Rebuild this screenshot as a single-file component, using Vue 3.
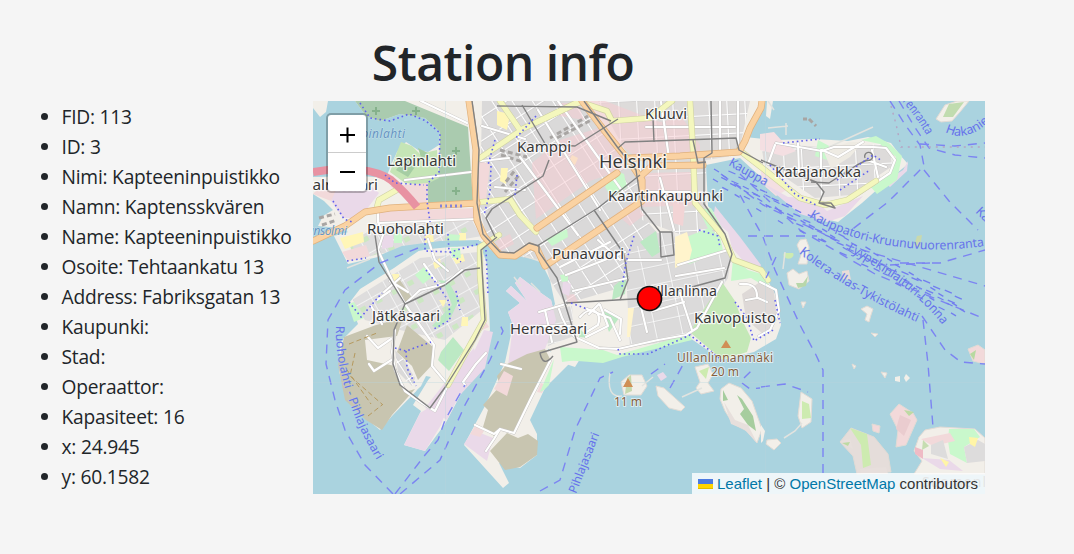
<script setup>
const info = [
  'FID: 113', 'ID: 3', 'Nimi: Kapteeninpuistikko', 'Namn: Kaptensskvären', 'Name: Kapteeninpuistikko',
  'Osoite: Tehtaankatu 13', 'Address: Fabriksgatan 13', 'Kaupunki:', 'Stad:', 'Operaattor:',
  'Kapasiteet: 16', 'x: 24.945', 'y: 60.1582'
]

const land = [
  'M355 101L366 116 380 121 400 114 425 118 440 132 439 145 428 152 418 150 406 142 397 152 391 165 386 178 362 176 313 177 313 194 324 201 333 210 323 216 318 226 340 228 348 232 334 236 348 264 378 257 402 247 440 241 480 241 505 256 528 254 540 260 550 280 555 304 549 315 545 345 560 362 575 367 580 359 618 357 690 338 722 360 754 352 776 339 781 325 778 300 765 275 738 248 728 227 708 206 706 165 740 158 800 213 838 222 862 203 880 187 908 164 900 155 891 143 868 137 848 141 815 139 775 140 745 137 754 119 764 101Z',
  'M350 302L360 289 394 268 420 250 480 244 487 264 490 330 475 372 461 394 445 424 425 451 404 445 421 411 413 405 430 377 392 416 380 430 352 407 339 372 340 342 358 324Z',
  'M506 291L511 286 527 301 515 283 520 277 541 293 551 300 556 320 548 350 570 363 545 388 530 420 537 434 537 455 520 468 499 463 509 483 503 488 464 445 486 404 505 362 513 325 508 312 520 303Z',
  'M313 101H328L326 112 320 117 313 108Z',
  'M767 101L773 101 770 119 766 116Z'
]

const cityBlocks = [
  ['grid-a', 'M482 101H585L645 185 640 213 672 250 630 285 565 304 550 280 545 262 490 250 480 210Z'],
  ['grid-b', 'M598 101H750L738 155 706 160 706 213 722 237 690 238 642 220 636 170Z'],
  ['grid-c', 'M625 254L660 232 674 232 680 266 732 250 728 278 690 338 630 347Z'],
  ['grid-d', 'M352 300L420 258 478 252 482 310 445 340 400 330 365 320Z'],
  ['grid-d', 'M348 240L380 226 478 220 482 236 378 254 355 261Z'],
  ['grid-b', 'M761 143L820 147 886 144 894 165 850 195 815 198 764 163Z'],
  ['grid-a', 'M395 350L404 360 415 378 412 386 398 372Z'],
  ['grid-c', 'M541 311L572 306 574 336 548 346Z']
]

const areas = [
  ['#aacbaf', 'M355 101H405L468 127 473 203 428 203 427 182 439 170 440 132 425 118 400 114 380 121 366 116Z'],
  ['#c5e5b6', 'M397 152L401 142 412 146 420 154 437 150 439 178 425 185 405 183 390 172Z'],
  ['#a5cda3', 'M405 158L417 164 408 177 396 170ZM418 148L428 153 422 160Z'],
  ['#f2d9da', 'M390 186L428 183 427 203 417 203ZM378 211L477 208 474 221 380 222Z'],
  ['#ead9e9', 'M333 192L365 181 379 193 360 218 343 218 331 201Z'],
  ['#f2d9da', 'M313 194L325 181 337 188 331 201ZM342 252L366 245 370 256 348 261ZM474 159L490 164 486 200 478 200ZM489 327L484 319 472 338 482 330Z'],
  ['#fff6b8', 'M340 238L363 232 364 242 345 249ZM425 234L433 235 434 243 425 244ZM459 233L466 233 466 243 459 243ZM497 111L510 114 507 130 497 125ZM501 168L508 168 506 184 500 181ZM433 263L440 258 441 266 435 269ZM452 257L463 254 465 261 456 264ZM392 274L399 274 400 281 395 284ZM439 300L447 300 443 307ZM462 317L468 317 468 326 461 326ZM572 155L578 158 575 165 569 161Z'],
  ['rgba(245,204,210,.55)', 'M578 101L605 101 660 122 682 117 700 145 700 158 638 158 620 145ZM532 163L560 140 602 127 628 168 590 181 536 219ZM642 173L690 172 701 205 640 207ZM616 214L634 201 644 215 630 226ZM496 241L510 234 514 244 500 251ZM566 295L574 294 578 302 568 303ZM558 103L578 103 584 120 560 116Z'],
  ['#f2d4d5', 'M673 203L685 205 683 226 673 223Z'],
  ['#ead9e9', 'M382 236L393 235 393 247 382 249ZM484 330L493 332 485 368 461 394 455 393ZM430 407L442 397 447 408 441 425 425 451 404 445 420 413ZM563 281L571 284 569 296 562 293Z'],
  ['#ead9e9', 'M447 380L474 348 477 360 447 420 433 411 425 408Z'],
  ['#c9f8cc', 'M415 275L424 267 433 276 423 284ZM448 234L460 235 458 247 450 247ZM348 304L354 302 364 318 354 322ZM394 233L402 233 402 243 394 243ZM451 248L460 248 461 258 452 258Z'],
  ['#bce9c4', 'M432 326L452 305 445 287 438 280 448 281 459 300 451 317 438 328ZM441 352L453 337 464 350 449 371 438 360Z'],
  ['#c8c5b0', 'M395 284L400 280 412 298 405 306ZM344 337L376 325 403 318 397 336 365 340 367 360 395 366 405 392 415 389 392 415 382 430 366 420 345 400 338 365ZM407 325L433 347 432 365 418 380 412 366 397 352Z'],
  ['#ead9e9', 'M506 291L511 286 527 301 515 283 520 277 541 293 551 300 556 320 545 349 523 361 507 374 513 325 508 312 520 303ZM464 444L473 430 493 438 487 461Z'],
  ['#c8c5b0', 'M507 364L527 354 545 349 550 359 530 402 514 433 500 429 494 436 483 427 488 410 483 405 500 386 497 376Z'],
  ['#c8c5b0', 'M490 451L507 433 518 438 528 434 538 441 537 455 520 467 505 470Z'],
  ['#f2d9da', 'M504 371L513 376 507 396 494 389ZM475 426L484 431 480 437 470 434ZM541 383L546 385 542 393 537 392Z'],
  ['#ead9e9', 'M715 206L740 237 761 265 759 270 746 264 732 248 728 232 713 220Z'],
  ['#c9f8cc', 'M605 187L614 170 624 174 627 187 612 198ZM684 238L709 228 720 237 723 250 690 264 683 263ZM699 210L711 208 722 228 709 231ZM560 347L603 350 617 355 690 334 692 340 622 357 603 363 565 360ZM546 239L567 229 568 237 552 246ZM560 275L568 274 568 281 562 282Z'],
  ['#c9f8cc', 'M733 258L748 270 765 275 771 290 751 278 731 281ZM560 347L571 350 577 360 562 362ZM554 359L549 385 544 390 540 392Z'],
  ['#c4e8b7', 'M722 282L700 315 690 332 722 360 747 352 751 338 742 320 735 301Z'],
  ['#ded9d7', 'M742 294L760 282 774 291 777 320 764 335 746 319Z'],
  ['#fff4cc', 'M675 237L687 232 692 250 689 262 675 268ZM628 308L634 308 630 337 627 337Z'],
  ['#bce9c4', 'M614 286L627 275 625 294 612 300ZM640 242L656 231 660 252 652 257ZM601 310L619 318 609 332ZM579 328L589 338 579 337Z'],
  ['#f4dfe2', 'M760 134L774 132 782 141 796 151 783 156 760 150ZM761 165L790 188 776 196 761 183Z'],
  ['#ead9e9', 'M760 181L788 197 813 198 827 211 863 196 845 216 827 222 800 214ZM884 182L903 170 908 161 907 171 890 187Z'],
  ['#c9f8cc', 'M818 140L833 148 827 160 815 156ZM861 140L876 136 890 144 902 156 897 180 877 194 870 186 890 172 896 157 880 144Z'],
  ['#eeebe3', 'M824 152L849 142 863 142 850 157 831 169Z']
]

const islands = [
  ['#f2efe9', 'M936 119L945 105 957 101 969 101 960 112 952 121 941 122Z', '#c1dcaf', 'M943 117L949 104 964 102 953 117Z'],
  ['#f2efe9', 'M787 273L793 269 799 274 807 271 809 281 799 289 789 285Z', '#b8d7aa', 'M796 283L803 283 808 276 806 286 798 288Z'],
  ['#f2efe9', 'M797 245L800 240 806 239 809 247 807 264 798 264 801 255Z', '#cdebb0', 'M784 253A5 4 0 1 0 793 253Z'],
  ['#f2efe9', 'M861 309L867 306 873 309 871 315 869 322 865 320 867 314Z', '#eadcd8', 'M842 271L849 270 851 280 843 279Z'],
  ['#f2efe9', 'M621 382L629 375 642 375 647 386 641 395 624 395Z', '#c6d8ae', 'M627 378L631 375 632 391 625 394Z'],
  ['#f2efe9', 'M656 386L664 388 685 407 681 411 669 408 658 396Z', '#ead9e9', 'M657 375L663 372 667 377 661 381Z'],
  ['#f2efe9', 'M695 367L708 364 713 374 708 383 714 391 701 394 696 388 700 382Z', '#cdebb0', 'M699 371L709 367 706 379Z'],
  ['#f2efe9', 'M721 389L729 383 741 388 752 401 758 418 762 429 757 443 747 431 733 424 725 411 720 399Z', '#a6cd9e', 'M723 390L728 400 723 401ZM737 395L742 399 753 416 756 431 748 425 740 414 744 409Z'],
  ['#f2efe9', 'M801 392L812 399 811 422 802 428 798 416Z', '#cdebb0', 'M802 401L809 404 811 418 802 419Z'],
  ['#e5ddda', 'M840 442L851 428 874 437 888 454 891 472 857 474 853 456Z', '#cdebb0', 'M850 428L867 434 871 465 863 468 861 445Z'],
  ['#f2d9da', 'M899 404L913 413 917 420 906 445 896 447 898 430 890 414Z', '#eacccf', 'M900 415L911 420 904 436 896 429Z'],
  ['#f2d9da', 'M872 424L880 426 879 433 873 431Z', '#f2efe9', 'M761 425L765 431 763 441 761 443Z'],
  ['#f2efe9', 'M919 437L925 430 940 427 975 429 985 438 985 474 914 474 922 461 914 451Z', '#c9f8cc', 'M949 429H974L980 437 964 447 967 463 950 454 948 441Z'],
  ['#f2d9da', 'M968 349L978 345 985 350 985 364 973 361Z', '#b7d9a0', 'M970 354L976 350 974 360Z'],
  ['#f2efe9', 'M852 364L856 366 854 369ZM881 372L887 373 885 378ZM871 333L878 334 875 337Z', '#f2efe9', 'M895 377L900 376 900 382 895 381ZM906 374L910 378 906 382 904 378Z'],
  ['#f2efe9', 'M767 440L777 439 781 443 774 450 766 444ZM801 302L806 302 803 308Z', '#c9d9ad', 'M917 236L922 235 920 247 914 246Z']
]
const islandDetails = [
  ['#f2d9da', 'M921 439L950 433 955 441 933 446Z'], ['#efbbc5', 'M915 447L923 450 923 459 915 454Z'],
  ['#c6ddb1', 'M923 440L929 446 922 450Z'], ['#dddcdc', 'M931 445L943 440 948 459 931 454ZM964 447L978 440 985 444 985 461 967 463Z'],
  ['#ead9e9', 'M922 458L949 460 963 471 940 469Z'], ['#fff5a7', 'M969 437L978 438 975 447 970 444ZM940 458L949 462 946 467Z'],
  ['#e7dfdc', 'M840 441L850 439 853 449ZM860 469L886 467 888 474H861ZM724 402L735 420 748 425 757 443 744 429 731 424Z'],
  ['#bddaa3', 'M842 443L850 442 848 446ZM904 410L914 412 909 416Z']
]

const whiteRoads = [
  'M378 205L378 222 383 235 378 250 392 280 405 304 424 331 434 345 432 366 448 385',
  'M405 304L420 290 445 284 462 270', 'M367 336L378 348 391 339 M384 292L400 278 M377 300L390 291 M371 306L382 324',
  'M369 364L374 371 393 359',
  'M395 330L392 352 395 370 405 391 422 403 435 411 448 385', 'M465 385L463 382 476 364 486 353',
  'M428 239L435 260 448 271 M390 281L408 292 M424 264L436 281',
  'M405 180L471 172 M421 101L467 123 M380 223L477 219',
  'M559 309Q564 326 575 337L599 348 618 349 658 340 686 335 697 328 722 282',
  'M587 309L610 318 620 340 M600 305L608 326 586 337 M640 303L647 332 M653 311L684 302 M680 293L692 330',
  'M566 275L625 252 M560 267L610 242 M573 291L628 278 M598 240L620 260 M628 260H661 M678 265L728 250 M676 276L724 268',
  'M580 317C591 304 603 312 598 325L585 333M589 314L599 304M605 310L621 319 620 334',
  'M760 282L776 290 779 311 770 330 759 336 M740 284Q758 282 757 298L746 300M758 298L767 302',
  'M501 364L521 369M475 425L494 434 500 429 514 433 531 398 550 361', 'M486 451L494 439 500 429',
  'M776 143L822 151 834 147 873 147 886 148 895 160 890 173 850 200',
  'M798 143L799 173 822 174 M821 150V174M775 145L768 164', 'M822 150L838 157 863 142M872 150L878 177 M867 160L886 167',
  'M482 126L502 132 525 139 M481 161L509 158 M495 187L525 190 M538 110L600 210 M558 101L625 195 M520 157L578 235',
  'M661 102L669 158 M720 101L720 155 M738 101V147 M646 127H735 M645 192H690 M660 178L674 230',
  'M539 312L566 304 M540 326L572 326M545 310L552 342'
]
const orangeRoads = [
  'M313 241L345 226 365 212 390 208 477 203', 'M469 101L476 150 475 180 477 220 484 236 500 255 515 256 530 246 537 249 545 266 642 201 642 180 632 165 600 125 582 101',
  'M537 228L617 173', 'M630 158L680 156 739 152 745 141 750 128 761 108 762 101', 'M642 175L652 166 703 165'
]
const yellowRoads = [
  'M500 101L520 130 580 102 607 111 612 121 650 118 672 101', 'M480 158L520 131', 'M580 101L537 122',
  'M463 204L510 199 520 215 536 232', 'M690 101L693 150 695 203 706 216 723 236 734 260 761 270 768 280',
  'M739 150L766 171 800 198 825 205 847 200 876 181', 'M499 235L480 247 480 275 484 320 470 345 448 385', 'M377 207L379 200 400 188'
]
const rails = [
  'M472 101L479 150 477 203 483 234 500 252 514 253 529 243 539 246 539 252 557 278 566 307 577 342 540 353Q543 368 553 356',
  'M584 101L618 148 636 170 642 209 660 232', 'M618 148L625 142 711 139 736 138 739 150 763 163',
  'M711 101L712 153 704 158 704 204 725 234 732 254 725 278 692 287', 'M640 175L598 208 537 246 M537 144L575 146 618 119 M497 106L577 107 611 121',
  'M549 160L543 176 492 209 486 218 495 237', 'M522 105L547 147', 'M693 140L698 163 706 162',
  'M375 235L379 262 405 304 394 330 393 364 400 385 430 408 446 386 475 340 485 320 481 250 497 237',
  'M405 304L445 285 465 270 480 268', 'M653 118L654 142', 'M594 210L624 254 628 280 620 300', 'M566 303L650 298', 'M761 160L773 165 816 182 824 192 819 203 835 208 831 203 820 203', 'M811 182L829 183 857 165 867 160A4 4 0 1 0 865 158', 'M660 232H672L674 255 661 257Z'
]
const ferries = [
  'M418 248L380 263 345 290 328 320 326 364 335 400 345 430 365 465 393 494', 'M400 494L440 460 465 405 490 360 503 331 499 323', 'M395 494L425 455 438 440 445 420 465 385',
  'M540 491L560 480 575 430 600 378 613 372', 'M890 101L906 126 920 145 924 166 888 202 850 231', 'M924 170L949 201 978 230', 'M899 101L914 126 929 148 955 155 985 158', 'M920 144L955 146 985 143',
  'M740 195L763 237 775 270 800 325 816 355 823 370 823 473', 'M748 236H817', 'M923 320L928 364 933 427', 'M922 316L945 350 961 362 985 364', 'M761 387L785 384 808 392',
  'M900 263L940 263 985 250', 'M776 257L766 278', 'M890 265L930 263', 'M651 374L665 364', 'M670 388L684 363', 'M744 378L755 367', 'M742 383L750 389 760 388', 'M740 174L800 230 875 274 985 319', 'M721 174L763 205 849 246 985 286'
]
const paths = [
  'M360 103L370 118 390 121 409 114 426 121 440 133 439 172 427 184 427 201 430 222', 'M385 175L395 183 424 185',
  'M333 201L344 219 352 222', 'M425 234L425 251 450 252 478 244', 'M448 234L449 251 461 262', 'M349 302L361 317 382 293',
  'M426 270L440 288 449 302 450 320 432 330', 'M456 291L460 310', 'M486 250L488 295', 'M395 348L406 351 431 342', 'M406 351L407 368 416 386',
  'M491 166L490 192 484 215', 'M517 175L515 195', 'M495 140L488 165', 'M536 116L515 139', 'M618 349L620 354 648 354 690 335 722 360', 'M735 302L747 318 754 341 775 329',
  'M783 143L820 139', 'M770 165L795 194 816 205', 'M837 180L873 155 882 161', 'M840 190L870 170', 'M634 236L626 262 622 287', 'M699 230L718 236 720 248', 'M571 303L587 309', 'M347 261L366 258', 'M775 300L780 323'
]
const ripples = Array.from({ length: 34 }, (_, i) => {
  const t = i / 33
  return { x: 714 + t * 238, y: 169 + t * 131 + Math.sin(i * 2.3) * 6, w: 5 + (i % 3) }
})
const buildings = ['M500 150L527 157', 'M501 155L523 162', 'M501 188L516 169', 'M505 192L520 174', 'M550 138L588 116', 'M557 138L595 118', 'M319 218L335 214', 'M322 225L337 220']
const labels = [
  ['Kluuvi', 645, 119, 42, 14.3], ['Kamppi', 517, 152, 54, 14.3], ['Helsinki', 599, 168, 68, 18], ['Lapinlahti', 387, 166, 69, 14.3],
  ['Kaartinkaupunki', 608, 201, 115, 14.3], ['Katajanokka', 775, 177, 86, 14.3], ['Ruoholahti', 367, 234, 77, 14.3],
  ['Punavuori', 552, 259, 72, 14.3], ['Jätkäsaari', 372, 321, 68, 14.3], ['Ullanlinna', 650, 296, 67, 14.3],
  ['Kaivopuisto', 694, 323, 82, 14.3], ['Hernesaari', 510, 334, 77, 14.3], ['Salmisaari', 304, 190, 74, 14]
]
const routes = [
  ['r1', 'M336 326C334 365 352 422 380 465', 'Ruoholahti - Pihlajasaari', 142, 12],
  ['r2', 'M576 494L600 433', 'Pihlajasaari', 64, 12],
  ['r3', 'M809 217C850 244 925 257 989 245', 'Kauppatori-Kruunuvuorenranta', 181, 12.5],
  ['r4', 'M799 253C827 276 875 304 919 323', 'Kolera-allas-Tykistölahti', 137, 12.5],
  ['r5', 'M847 250C873 265 919 292 943 326', 'Lyypekinlaituri-Lonna', 122, 12.5],
  ['r6', 'M728 165Q747 176 767 187', 'Kauppa', 43, 12.5],
  ['r7', 'M894 92Q917 117 928 138', 'uorenranta', 54, 12.5],
  ['r8', 'M945 132C960 140 977 135 992 119', 'Hakanie', 49, 12.5],
  ['r9', 'M975 212L998 235', 'Kaup', 31, 12.5]
]
</script>

<template>
  <main class="page">
    <ul class="details">
      <li v-for="row in info" :key="row"><span>{{ row }}</span></li>
    </ul>
    <section class="content">
      <h1>Station info</h1>
      <div class="map">
        <svg class="tiles" viewBox="313 101 672 393" aria-label="Map of Helsinki">
          <defs>
            <pattern id="grid-a" width="17" height="20" patternUnits="userSpaceOnUse" patternTransform="rotate(-33)"><rect width="17" height="20" fill="#dad9d9"/><path d="M0 0H17M0 0V20" stroke="#ccc" stroke-width="2.8"/><path d="M0 0H17M0 0V20" stroke="#fff" stroke-width="2"/></pattern>
            <pattern id="grid-b" width="18" height="19" patternUnits="userSpaceOnUse" patternTransform="rotate(-3)"><rect width="18" height="19" fill="#dddbda"/><path d="M0 0H18M0 0V19" stroke="#ccc" stroke-width="2.8"/><path d="M0 0H18M0 0V19" stroke="#fff" stroke-width="2"/></pattern>
            <pattern id="grid-c" width="26" height="18" patternUnits="userSpaceOnUse" patternTransform="rotate(-12)"><rect width="26" height="18" fill="#dbdada"/><path d="M0 0H26M0 0V18" stroke="#ccc" stroke-width="2.4"/><path d="M0 0H26M0 0V18" stroke="#fff" stroke-width="1.6"/></pattern>
            <pattern id="grid-d" width="18" height="20" patternUnits="userSpaceOnUse" patternTransform="rotate(-29)"><rect width="18" height="20" fill="#dedddd"/><path d="M0 0H18M0 0V20" stroke="#ccc" stroke-width="2.2"/><path d="M0 0H18M0 0V20" stroke="#fff" stroke-width="1.5"/><path d="M3 4h6v5H3z" fill="#cce7c3"/></pattern>
          </defs>
          <path class="land" v-for="d in land" :key="d" :d="d"/>
          <path v-for="[p, d] in cityBlocks" :key="d" :fill="`url(#${p})`" :d="d"/>
          <path v-for="[c, d] in areas" :key="d" :fill="c" :d="d"/>
          <path class="water" d="M378 256L402 246 440 241 479 240 479 246 440 247 402 254 378 265ZM413 402L426 376 431 377 417 390Z"/>
          <g v-for="i in islands" :key="i[1]"><path class="shore" :fill="i[0]" :d="i[1]"/><path :fill="i[2]" :d="i[3]"/></g>
          <path v-for="[c, d] in islandDetails" :key="d" :fill="c" :d="d"/>
          <path class="pier" d="M768 101L774 110M768 128L788 126M786 123V135M829 147L873 127M610 373Q606 398 622 396M642 386L653 377M682 397L702 388M784 438L795 431 802 423M785 252L783 269M514 277L521 286M531 283L540 292M347 268L370 259M522 255L545 263"/>
          <g class="trees"><path v-for="[x,y] in [[376,111],[416,111],[456,151],[456,191]]" :key="`${x}${y}`" :d="`M${x-4} ${y}h8m-4-4v8`"/></g>
          <path class="building" v-for="d in buildings" :key="d" :d="d"/>
          <g class="roads"><path class="edge" v-for="d in whiteRoads" :key="d" :d="d"/><path class="white" v-for="d in whiteRoads" :key="d + 'w'" :d="d"/></g>
          <g class="roads yellow"><path v-for="d in yellowRoads" :key="d" :d="d"/><path class="fill" v-for="d in yellowRoads" :key="d + 'f'" :d="d"/></g>
          <g class="roads orange"><path v-for="d in orangeRoads" :key="d" :d="d"/><path class="fill" v-for="d in orangeRoads" :key="d + 'f'" :d="d"/></g>
          <path class="motorway" d="M313 172C345 166 376 169 391 180Q404 191 417 207"/>
          <path class="tunnel" d="M440 206H462"/>
          <path class="rail" v-for="d in rails" :key="d" :d="d"/>
          <path class="footway" v-for="d in paths" :key="d" :d="d"/>
          <path class="ferry" v-for="d in ferries" :key="d" :d="d"/>
          <g class="ripples"><path v-for="r in ripples" :key="r.x" :d="`M${r.x} ${r.y}l${r.w} 3m3 3l${r.w} 3m-14 1l${r.w} 3`"/></g>
          <path class="tracks" d="M349 344L377 333M355 353L350 376 383 405M347 370L371 404M368 416L382 405"/>
          <path class="border" d="M891 106L896 124 901 147 985 147"/>
          <path class="tile-seam" d="M313 382.500H985M445.500 101V494M765.500 101V494"/>
          <path class="building" d="M803 119H807M809 119L816 126"/>
          <path class="peak" d="M628 378l5 9h-10zM726 340l5 8h-10z"/>
          <g class="peak-label"><text x="677" y="362" textLength="96">Ullanlinnanmäki</text><text x="711" y="376" textLength="28">20 m</text><text x="614" y="406" textLength="28">11 m</text></g>
          <g class="water-label"><text x="354" y="138" textLength="51">apinlahti</text><text x="307" y="235" textLength="40">ansolmi</text></g>
          <g class="label"><text v-for="[t,x,y,w,s] in labels" :key="t" :x="x" :y="y" :textLength="w" lengthAdjust="spacingAndGlyphs" :font-size="s">{{ t }}</text></g>
          <g class="route-label" v-for="[id,d,t,w,s] in routes" :key="id"><path :id="id" :d="d" fill="none" stroke="none"/><text :font-size="s"><textPath :href="`#${id}`" :textLength="w" lengthAdjust="spacingAndGlyphs">{{ t }}</textPath></text></g>
          <text class="island-label" x="922" y="487" textLength="64">Suomenl</text>
          <circle class="marker" cx="649.500" cy="298.500" r="12"/>
        </svg>
        <div class="zoom">
          <button aria-label="Zoom in"><svg viewBox="0 0 38 38"><path d="M12 20H27M19.500 12.500V27.500"/></svg></button>
          <button aria-label="Zoom out"><svg viewBox="0 0 38 38"><path d="M12 19H27"/></svg></button>
        </div>
        <div class="attribution"><svg class="flag" viewBox="0 0 15 10"><path fill="#4c7be1" d="M0 0h15v5H0z"/><path fill="#ffd500" d="M0 5h15v5H0z"/><path fill="#e0bc00" d="M0 9h15v1H0z"/></svg><a>Leaflet</a> | © <a>OpenStreetMap</a> contributors</div>
      </div>
    </section>
  </main>
</template>

<style>
body { margin: 0; background: #f5f5f5; }
</style>
<style scoped>
.page { width: 1074px; height: 554px; display: flex; align-items: flex-start; color: #212529; background: #f5f5f5; font-family: "Open Sans", "Noto Sans", sans-serif; overflow: hidden; }
.details { box-sizing: border-box; width: 313px; margin: 102px 0 0; padding: 0 0 0 61.500px; font-size: 19.200px; line-height: 30px; white-space: nowrap; letter-spacing: -.22px; }
.content { width: 672px; }
h1 { width: 380px; margin: 34px 0 9px; text-align: center; font-size: 48px; line-height: 58px; font-weight: 600; letter-spacing: -.5px; white-space: nowrap; }
.map { width: 672px; height: 393px; position: relative; overflow: hidden; background: #aad3df; }
.tiles { display: block; width: 672px; height: 393px; fill: none; }
.land { fill: #f2efe9; }
.water { fill: #aad3df; }
.shore { stroke: #e1dbd5; stroke-width: 1; }
.pier { stroke: #e2e3df; stroke-width: 1.5; }
.trees { stroke: #85b18b; stroke-width: 2; }
.building { fill: none; stroke: #a8a5a3; stroke-width: 3; stroke-dasharray: 5 3; }
.roads { fill: none; stroke-linecap: round; stroke-linejoin: round; }
.edge { stroke: #c4c2c0; stroke-width: 3; }
.white { stroke: #fff; stroke-width: 2.2; }
.yellow { stroke: #cfd2a4; stroke-width: 6.2; }
.yellow .fill { stroke: #f4f7bd; stroke-width: 5; }
.orange { stroke: #e0b17d; stroke-width: 7; }
.orange .fill { stroke: #fad2a2; stroke-width: 5.6; }
.motorway { stroke: #e892a2; stroke-width: 8; }
.tunnel { stroke: #8583d8; stroke-width: 3; stroke-dasharray: 2 3; }
.rail { stroke: #818181; stroke-width: 1.4; stroke-linejoin: round; }
.footway { stroke: #6060ee; stroke-width: 1.6; stroke-dasharray: 1.6 3; }
.ferry { stroke: #7c84f2; stroke-width: 1.4; stroke-dasharray: 9 7; }
.ripples { stroke: #727eef; stroke-width: 1.3; }
.tracks { stroke: #b5995e; stroke-width: 1; stroke-dasharray: 5 3; }
.border { stroke: #b6a4c3; stroke-width: 1.4; stroke-dasharray: 2 5; }
.tile-seam { stroke: #b8d5dc; stroke-width: .6; opacity: .6; }
.peak { fill: #d08f55; }
.peak-label, .water-label, .label, .route-label { font-family: "Noto Sans", sans-serif; paint-order: stroke; stroke-linejoin: round; }
.label { fill: #383838; stroke: rgba(255,255,255,.75); stroke-width: 2.5; }
.peak-label { fill: #85603f; stroke: rgba(255,255,255,.6); stroke-width: 2; font-size: 12px; }
.water-label { fill: #6695c3; stroke: rgba(255,255,255,.35); stroke-width: 1; font-size: 12px; font-style: italic; }
.route-label { fill: #6672eb; stroke: rgba(170,211,223,.4); stroke-width: 1; }
.island-label { fill: #777; font: 14px "Noto Sans", sans-serif; }
.marker { fill: red; stroke: #111; stroke-width: 1.7; }
.zoom { position: absolute; top: 12px; left: 13px; width: 38px; height: 76px; border: 2px solid rgba(0,0,0,.25); border-radius: 5px; background: white; background-clip: padding-box; display: flex; flex-direction: column; }
.zoom button { height: 38px; border: 0; padding: 0; background: transparent; }
.zoom button:first-child { border-bottom: 1px solid #ccc; }
.zoom svg { width: 38px; height: 38px; display: block; stroke: #000; stroke-width: 2; }
.attribution { box-sizing: border-box; position: absolute; right: 0; bottom: 0; width: 293px; height: 21px; padding-left: 6px; background: rgba(255,255,255,.8); color: #333; font: 15px/21px "Liberation Sans", Arial, sans-serif; white-space: nowrap; }
.attribution a { color: #0078a8; }
.flag { width: 15px; height: 10px; margin-right: 4px; }
</style>
